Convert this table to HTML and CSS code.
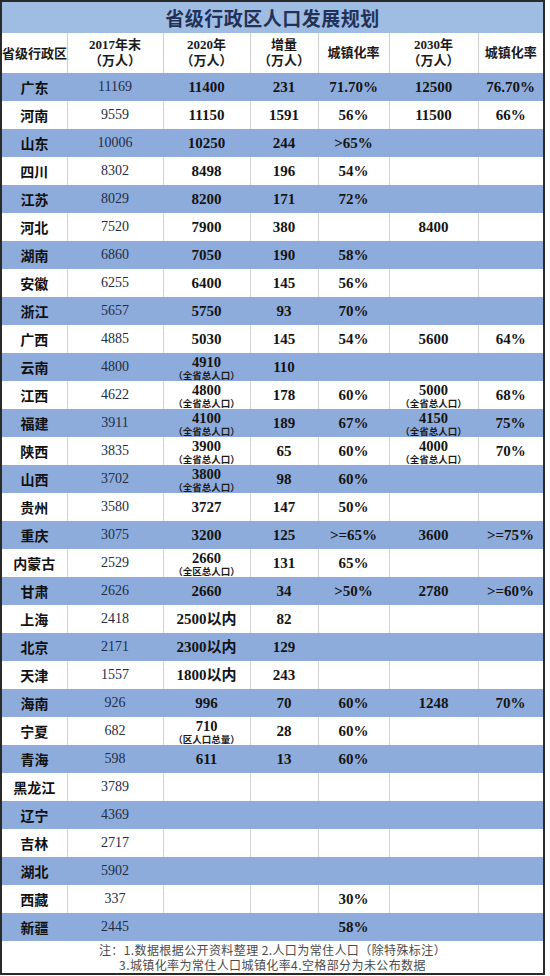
FILE: index.html
```html
<!DOCTYPE html>
<html lang="zh-CN">
<head>
<meta charset="utf-8">
<title>省级行政区人口发展规划</title>
<link rel="stylesheet" href="styles.css">
</head>
<body>
<div class="sheet">
  <table class="grid">
    <colgroup>
      <col class="c1"><col class="c2"><col class="c3"><col class="c4"><col class="c5"><col class="c6"><col class="c7">
    </colgroup>
    <thead>
      <tr class="title-row"><th colspan="7">省级行政区人口发展规划</th></tr>
      <tr class="head-row">
        <th>省级行政区</th>
        <th>2017年末<br>（万人）</th>
        <th>2020年<br>（万人）</th>
        <th>增量<br>（万人）</th>
        <th>城镇化率</th>
        <th>2030年<br>（万人）</th>
        <th>城镇化率</th>
      </tr>
    </thead>
    <tbody>
      <tr class="blue"><td class="n">广东</td><td class="y17">11169</td><td>11400</td><td>231</td><td>71.70%</td><td>12500</td><td>76.70%</td></tr>
      <tr><td class="n">河南</td><td class="y17">9559</td><td>11150</td><td>1591</td><td>56%</td><td>11500</td><td>66%</td></tr>
      <tr class="blue"><td class="n">山东</td><td class="y17">10006</td><td>10250</td><td>244</td><td>&gt;65%</td><td></td><td></td></tr>
      <tr><td class="n">四川</td><td class="y17">8302</td><td>8498</td><td>196</td><td>54%</td><td></td><td></td></tr>
      <tr class="blue"><td class="n">江苏</td><td class="y17">8029</td><td>8200</td><td>171</td><td>72%</td><td></td><td></td></tr>
      <tr><td class="n">河北</td><td class="y17">7520</td><td>7900</td><td>380</td><td></td><td>8400</td><td></td></tr>
      <tr class="blue"><td class="n">湖南</td><td class="y17">6860</td><td>7050</td><td>190</td><td>58%</td><td></td><td></td></tr>
      <tr><td class="n">安徽</td><td class="y17">6255</td><td>6400</td><td>145</td><td>56%</td><td></td><td></td></tr>
      <tr class="blue"><td class="n">浙江</td><td class="y17">5657</td><td>5750</td><td>93</td><td>70%</td><td></td><td></td></tr>
      <tr><td class="n">广西</td><td class="y17">4885</td><td>5030</td><td>145</td><td>54%</td><td>5600</td><td>64%</td></tr>
      <tr class="blue"><td class="n">云南</td><td class="y17">4800</td><td class="two"><span class="num">4910</span><span class="note">（全省总人口）</span></td><td>110</td><td></td><td></td><td></td></tr>
      <tr><td class="n">江西</td><td class="y17">4622</td><td class="two"><span class="num">4800</span><span class="note">（全省总人口）</span></td><td>178</td><td>60%</td><td class="two"><span class="num">5000</span><span class="note">（全省总人口）</span></td><td>68%</td></tr>
      <tr class="blue"><td class="n">福建</td><td class="y17">3911</td><td class="two"><span class="num">4100</span><span class="note">（全省总人口）</span></td><td>189</td><td>67%</td><td class="two"><span class="num">4150</span><span class="note">（全省总人口）</span></td><td>75%</td></tr>
      <tr><td class="n">陕西</td><td class="y17">3835</td><td class="two"><span class="num">3900</span><span class="note">（全省总人口）</span></td><td>65</td><td>60%</td><td class="two"><span class="num">4000</span><span class="note">（全省总人口）</span></td><td>70%</td></tr>
      <tr class="blue"><td class="n">山西</td><td class="y17">3702</td><td class="two"><span class="num">3800</span><span class="note">（全省总人口）</span></td><td>98</td><td>60%</td><td></td><td></td></tr>
      <tr><td class="n">贵州</td><td class="y17">3580</td><td>3727</td><td>147</td><td>50%</td><td></td><td></td></tr>
      <tr class="blue"><td class="n">重庆</td><td class="y17">3075</td><td>3200</td><td>125</td><td>&gt;=65%</td><td>3600</td><td>&gt;=75%</td></tr>
      <tr><td class="n">内蒙古</td><td class="y17">2529</td><td class="two"><span class="num">2660</span><span class="note">（全区总人口）</span></td><td>131</td><td>65%</td><td></td><td></td></tr>
      <tr class="blue"><td class="n">甘肃</td><td class="y17">2626</td><td>2660</td><td>34</td><td>&gt;50%</td><td>2780</td><td>&gt;=60%</td></tr>
      <tr><td class="n">上海</td><td class="y17">2418</td><td>2500以内</td><td>82</td><td></td><td></td><td></td></tr>
      <tr class="blue"><td class="n">北京</td><td class="y17">2171</td><td>2300以内</td><td>129</td><td></td><td></td><td></td></tr>
      <tr><td class="n">天津</td><td class="y17">1557</td><td>1800以内</td><td>243</td><td></td><td></td><td></td></tr>
      <tr class="blue"><td class="n">海南</td><td class="y17">926</td><td>996</td><td>70</td><td>60%</td><td>1248</td><td>70%</td></tr>
      <tr><td class="n">宁夏</td><td class="y17">682</td><td class="two"><span class="num">710</span><span class="note">（区人口总量）</span></td><td>28</td><td>60%</td><td></td><td></td></tr>
      <tr class="blue"><td class="n">青海</td><td class="y17">598</td><td>611</td><td>13</td><td>60%</td><td></td><td></td></tr>
      <tr><td class="n">黑龙江</td><td class="y17">3789</td><td></td><td></td><td></td><td></td><td></td></tr>
      <tr class="blue"><td class="n">辽宁</td><td class="y17">4369</td><td></td><td></td><td></td><td></td><td></td></tr>
      <tr><td class="n">吉林</td><td class="y17">2717</td><td></td><td></td><td></td><td></td><td></td></tr>
      <tr class="blue"><td class="n">湖北</td><td class="y17">5902</td><td></td><td></td><td></td><td></td><td></td></tr>
      <tr><td class="n">西藏</td><td class="y17">337</td><td></td><td></td><td>30%</td><td></td><td></td></tr>
      <tr class="blue"><td class="n">新疆</td><td class="y17">2445</td><td></td><td></td><td>58%</td><td></td><td></td></tr>
    </tbody>
  </table>
  <div class="foot">
    <p>注：1.数据根据公开资料整理 2.人口为常住人口（除特殊标注）</p>
    <p>3.城镇化率为常住人口城镇化率4.空格部分为未公布数据</p>
  </div>
</div>
</body>
</html>
```
FILE: styles.css
```css
html, body {
  margin: 0;
  padding: 0;
  background: #ffffff;
}
body {
  font-family: "Liberation Serif", "Noto Sans CJK SC", serif;
  color: #141414;
}
.sheet {
  width: 541px;
  border: 2px solid #2a2a2a;
  background: #ffffff;
}
.grid {
  width: 541px;
  border-collapse: collapse;
  table-layout: fixed;
}
.c1 { width: 65px; }
.c2 { width: 96px; }
.c3 { width: 87px; }
.c4 { width: 68px; }
.c5 { width: 71px; }
.c6 { width: 89px; }
.c7 { width: 65px; }

.grid th, .grid td {
  padding: 0;
  text-align: center;
  vertical-align: middle;
  white-space: nowrap;
  overflow: hidden;
}
.title-row th {
  height: 31px;
  background: #9fbce3;
  font-family: "Noto Sans CJK SC", sans-serif;
  font-size: 19px;
  font-weight: 700;
  color: #213157;
  letter-spacing: 0.5px;
}
.head-row th {
  height: 40px;
  background: #ffffff;
  font-size: 13px;
  line-height: 16px;
  font-weight: 700;
  color: #1a1a1a;
  border-left: 1px solid #cfcfcf;
}
.head-row th:first-child { border-left: none; font-family: "Noto Sans CJK SC", sans-serif; }
.grid td {
  height: 28px;
  font-size: 15px;
  font-weight: 700;
  line-height: 14px;
  border-left: 1px solid #d2d2d2;
}
.grid td:first-child { border-left: none; }
.grid tr.blue td {
  background: #8eacdb;
  border-left: none;
}
.grid td.n {
  font-family: "Noto Sans CJK SC", sans-serif;
  font-size: 14px;
  color: #111111;
}
.grid td.y17 {
  font-size: 14px;
  font-weight: 400;
  color: #222c46;
}
.num {
  display: block;
  font-size: 14.5px;
  line-height: 14px;
  padding-top: 1px;
}
.note {
  display: block;
  font-family: "Noto Sans CJK SC", sans-serif;
  font-size: 9.5px;
  line-height: 12px;
  font-weight: 700;
  color: #1a1a1a;
}
.foot {
  height: 32px;
  padding-top: 1px;
  box-sizing: border-box;
  font-family: "Noto Sans CJK SC", sans-serif;
  font-size: 12px;
  line-height: 15px;
  letter-spacing: 0.4px;
  color: #4a4a4a;
  text-align: center;
}
.foot p { margin: 0; }
```
